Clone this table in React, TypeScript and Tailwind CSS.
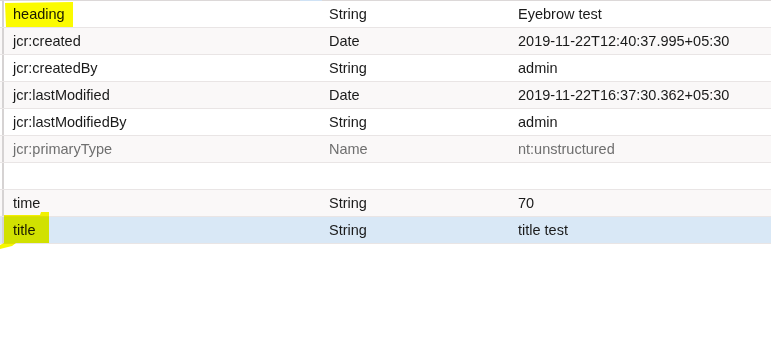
const rows = [
  { name: "heading", type: "String", value: "Eyebrow test" },
  { name: "jcr:created", type: "Date", value: "2019-11-22T12:40:37.995+05:30" },
  { name: "jcr:createdBy", type: "String", value: "admin" },
  { name: "jcr:lastModified", type: "Date", value: "2019-11-22T16:37:30.362+05:30" },
  { name: "jcr:lastModifiedBy", type: "String", value: "admin" },
  { name: "jcr:primaryType", type: "Name", value: "nt:unstructured", muted: true },
  { name: "", type: "", value: "" },
  { name: "time", type: "String", value: "70" },
  { name: "title", type: "String", value: "title test", selected: true },
];

export default function App() {
  return (
    <div className="relative w-[771px] h-[359px] bg-white overflow-hidden font-['Liberation_Sans',Arial,sans-serif] text-[14.5px] text-[#1a1a1a]">
      {/* top edge of the header row that's scrolled out */}
      <div className="flex h-px">
        <div className="w-[300px] bg-[#dcd8d8]" />
        <div className="w-[22px] bg-[#cfe2f5]" />
        <div className="flex-1 bg-[#dcd8d8]" />
      </div>

      <div className="flex flex-col">
        {rows.map((r, i) => (
          <div
            key={i}
            className={
              "grid grid-cols-[329px_189px_1fr] h-[27px] border-b border-[#e9e5e5] " +
              (r.selected ? "bg-[#d9e8f6]" : i % 2 === 1 ? "bg-[#faf8f8]" : "bg-white") +
              (r.muted ? " text-[#6f6f6f]" : "")
            }
          >
            <div className="flex h-full">
              <div className="w-[2px] h-full ml-[2px] bg-[#d6d3d3]" />
              <span className="pl-[9px] pt-[4px] leading-[18px]">{r.name}</span>
            </div>
            <span className="pt-[4px] leading-[18px]">{r.type}</span>
            <span className="pt-[4px] leading-[18px]">{r.value}</span>
          </div>
        ))}
      </div>

      {/* marker highlights drawn over the screenshot */}
      <svg className="absolute left-0 top-0 pointer-events-none mix-blend-multiply" width="771" height="359">
        <path d="M5 3 L73 2 L73 27 L6 27 Z" fill="#fbfb00" />
        <path
          d="M4 215 L40 215 L41 212 L49 212 L49 243 L16 243 L12 246 L4 248 L0 249 L0 245 L4 243 Z"
          fill="#f6f800"
        />
      </svg>
    </div>
  );
}
